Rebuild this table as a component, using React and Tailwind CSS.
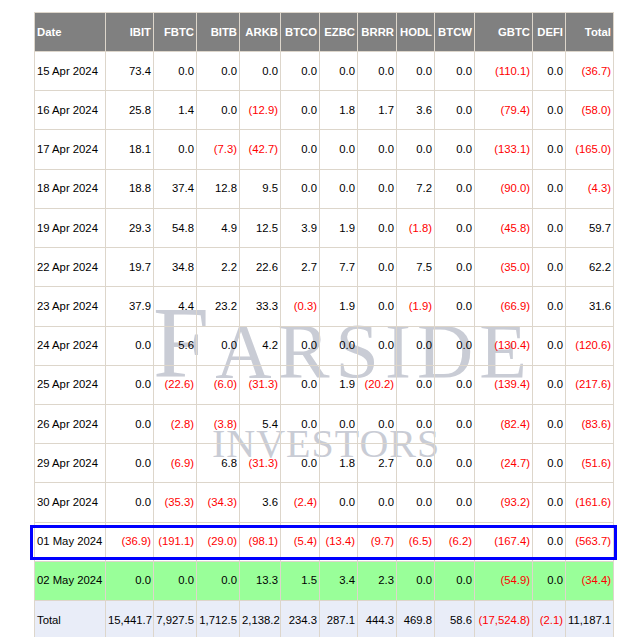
const headers = ["Date", "IBIT", "FBTC", "BITB", "ARKB", "BTCO", "EZBC", "BRRR", "HODL", "BTCW", "GBTC", "DEFI", "Total"];

const widths = [
  "w-[72px]", "w-[48px]", "w-[43px]", "w-[43px]", "w-[41px]", "w-[39px]", "w-[38px]",
  "w-[39px]", "w-[38px]", "w-[40px]", "w-[58px]", "w-[33px]", "w-[48px]",
];

const rows = [
  ["15 Apr 2024", "73.4", "0.0", "0.0", "0.0", "0.0", "0.0", "0.0", "0.0", "0.0", "(110.1)", "0.0", "(36.7)"],
  ["16 Apr 2024", "25.8", "1.4", "0.0", "(12.9)", "0.0", "1.8", "1.7", "3.6", "0.0", "(79.4)", "0.0", "(58.0)"],
  ["17 Apr 2024", "18.1", "0.0", "(7.3)", "(42.7)", "0.0", "0.0", "0.0", "0.0", "0.0", "(133.1)", "0.0", "(165.0)"],
  ["18 Apr 2024", "18.8", "37.4", "12.8", "9.5", "0.0", "0.0", "0.0", "7.2", "0.0", "(90.0)", "0.0", "(4.3)"],
  ["19 Apr 2024", "29.3", "54.8", "4.9", "12.5", "3.9", "1.9", "0.0", "(1.8)", "0.0", "(45.8)", "0.0", "59.7"],
  ["22 Apr 2024", "19.7", "34.8", "2.2", "22.6", "2.7", "7.7", "0.0", "7.5", "0.0", "(35.0)", "0.0", "62.2"],
  ["23 Apr 2024", "37.9", "4.4", "23.2", "33.3", "(0.3)", "1.9", "0.0", "(1.9)", "0.0", "(66.9)", "0.0", "31.6"],
  ["24 Apr 2024", "0.0", "5.6", "0.0", "4.2", "0.0", "0.0", "0.0", "0.0", "0.0", "(130.4)", "0.0", "(120.6)"],
  ["25 Apr 2024", "0.0", "(22.6)", "(6.0)", "(31.3)", "0.0", "1.9", "(20.2)", "0.0", "0.0", "(139.4)", "0.0", "(217.6)"],
  ["26 Apr 2024", "0.0", "(2.8)", "(3.8)", "5.4", "0.0", "0.0", "0.0", "0.0", "0.0", "(82.4)", "0.0", "(83.6)"],
  ["29 Apr 2024", "0.0", "(6.9)", "6.8", "(31.3)", "0.0", "1.8", "2.7", "0.0", "0.0", "(24.7)", "0.0", "(51.6)"],
  ["30 Apr 2024", "0.0", "(35.3)", "(34.3)", "3.6", "(2.4)", "0.0", "0.0", "0.0", "0.0", "(93.2)", "0.0", "(161.6)"],
  ["01 May 2024", "(36.9)", "(191.1)", "(29.0)", "(98.1)", "(5.4)", "(13.4)", "(9.7)", "(6.5)", "(6.2)", "(167.4)", "0.0", "(563.7)"],
  ["02 May 2024", "0.0", "0.0", "0.0", "13.3", "1.5", "3.4", "2.3", "0.0", "0.0", "(54.9)", "0.0", "(34.4)"],
  ["Total", "15,441.7", "7,927.5", "1,712.5", "2,138.2", "234.3", "287.1", "444.3", "469.8", "58.6", "(17,524.8)", "(2.1)", "11,187.1"],
];

const rowBg = (date) => {
  if (date === "02 May 2024") return "bg-[#99ff99]";
  if (date === "Total") return "bg-[#e9edf8]";
  return "";
};

// faint logo behind the table body
const Watermark = () => {
  return (
    <div className="absolute inset-0 pointer-events-none select-none text-[#c9ccd5]" style={{ fontFamily: '"Liberation Serif", "Times New Roman", serif' }}>
      <div className="absolute left-[153px] top-[293px] text-[101px] leading-none tracking-[6px] whitespace-nowrap">
        F<span className="text-[78px]">ARSIDE</span>
      </div>
      <div className="absolute left-[212px] top-[424px] text-[40px] leading-none tracking-[1px] whitespace-nowrap">
        INVESTORS
      </div>
    </div>
  );
};

const App = () => {
  return (
    <div className="relative min-h-[637px] bg-white pl-[34px] pt-[12px]" style={{ fontFamily: '"Liberation Sans", Arial, sans-serif' }}>
      <Watermark />
      <table className="relative table-fixed border-separate border-spacing-0 w-[580px] text-[11.3px] text-black">
        <thead>
          <tr>
            {headers.map((h, i) => (
              <th
                key={h}
                className={`${widths[i]} h-[40px] bg-[#808080] text-white font-bold px-[2px] border-t border-b border-r border-[#ddd6cb] ${i === 0 ? "border-l text-left" : "text-right"}`}
              >
                {h}
              </th>
            ))}
          </tr>
        </thead>
        <tbody>
          {rows.map((row) => (
            <tr key={row[0]} className={rowBg(row[0])}>
              {row.map((v, i) => (
                <td
                  key={i}
                  className={`h-[39.23px] px-[2px] border-b border-r border-[#ddd6cb] ${i === 0 ? "border-l text-left" : "text-right"} ${v.startsWith("(") ? "text-[#ff0000]" : ""}`}
                >
                  {v}
                </td>
              ))}
            </tr>
          ))}
        </tbody>
      </table>
      {/* highlight box drawn over the 01 May row */}
      <div className="absolute left-[30px] top-[525px] w-[587px] h-[35px] border-[3px] border-[#0000ff] pointer-events-none" />
    </div>
  );
};

export default App;
